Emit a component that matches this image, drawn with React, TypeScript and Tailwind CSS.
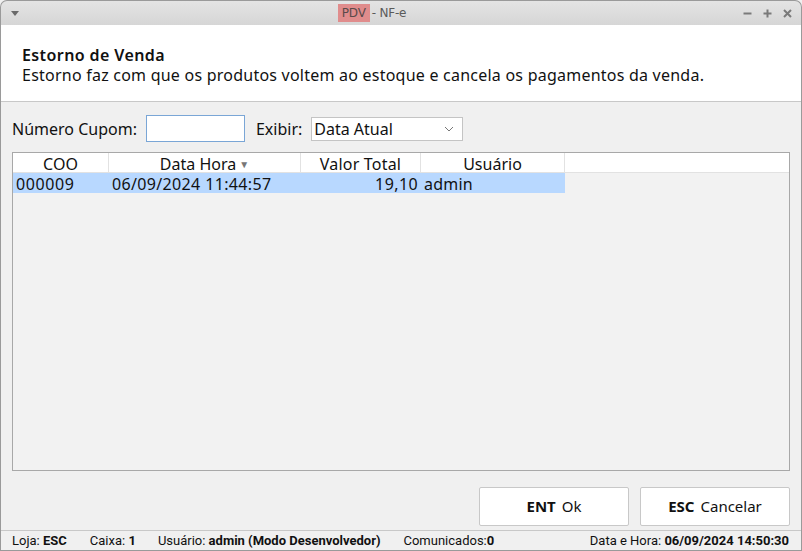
import React from "react";

const font = { fontFamily: '"Noto Sans", "Open Sans", sans-serif' };

export default function App() {
  return (
    <div className="w-[802px] h-[551px] bg-[#f0f0f0] flex flex-col overflow-hidden" style={font}>
      {/* title bar */}
      <div className="h-[25px] shrink-0 rounded-t-[7px] border border-b-0 border-[#9a9a9a] bg-gradient-to-b from-[#e4e4e4] to-[#d6d6d6] flex items-center relative">
        <svg width="10" height="8" viewBox="0 0 10 8" className="ml-[9px]">
          <path d="M1 2 L9 2 L5 7 Z" fill="#6a6a6a" />
        </svg>
        <div className="absolute left-0 right-0 top-0 h-full flex items-center justify-center pointer-events-none pr-[58px]">
          <span className="text-[12px] text-[#5a5a5a] flex items-center" style={{ fontFamily: '"DejaVu Sans", sans-serif', letterSpacing: "-0.2px" }}>
            <span className="bg-[#e08c8c] px-[4px] h-[18px] leading-[18px] text-[#5a4a4a]">PDV</span>
            <span className="ml-[2px]">- NF-e</span>
          </span>
        </div>
        <div className="ml-auto mr-[9px] flex items-center gap-[11px] text-[#7a7a7a]">
          <svg width="9" height="9" viewBox="0 0 9 9"><path d="M0.5 4.5 H8.5" stroke="#7a7a7a" strokeWidth="2" /></svg>
          <svg width="9" height="9" viewBox="0 0 9 9"><path d="M0.5 4.5 H8.5 M4.5 0.5 V8.5" stroke="#7a7a7a" strokeWidth="2" /></svg>
          <svg width="9" height="9" viewBox="0 0 9 9"><path d="M1 1 L8 8 M8 1 L1 8" stroke="#7a7a7a" strokeWidth="2" /></svg>
        </div>
      </div>

      <div className="flex-1 flex flex-col border-x border-b border-[#9a9a9a] min-h-0">
        {/* header */}
        <div className="h-[77px] shrink-0 bg-white border-b border-[#c8c8c8] pl-[21px] pt-[20px]">
          <div className="text-[16px] font-semibold text-[#111] leading-[20px] tracking-[0.4px]">Estorno de Venda</div>
          <div className="text-[16px] text-[#111] leading-[20px] tracking-[0.23px]">Estorno faz com que os produtos voltem ao estoque e cancela os pagamentos da venda.</div>
        </div>

        {/* body */}
        <div className="flex-1 flex flex-col px-[11px] pt-[13px] min-h-0">
          <div className="h-[27px] flex items-center text-[16px] text-[#111]">
            <span>Número Cupom:</span>
            <div className="ml-[9px] w-[99px] h-[27px] bg-white border border-[#7aa6d6]" />
            <span className="ml-[11px]">Exibir:</span>
            <div className="ml-[9px] w-[152px] h-[24px] bg-white border border-[#c4c4c4] flex items-center pl-[2px] pr-[8px]">
              <span>Data Atual</span>
              <svg className="ml-auto" width="10" height="6" viewBox="0 0 10 6"><path d="M1 1 L5 5 L9 1" stroke="#777" fill="none" strokeWidth="1" /></svg>
            </div>
          </div>

          {/* table */}
          <div className="mt-[10px] h-[319px] border border-[#a8a8a8] bg-[#f2f2f2] flex flex-col text-[16px] text-[#111]">
            <div className="h-[20px] bg-white flex border-b border-[#e2e2e2] leading-[20px]">
              <div className="w-[96px] text-center border-r border-[#e2e2e2] pt-[1px]">COO</div>
              <div className="w-[192px] border-r border-[#e2e2e2] pt-[1px] flex items-start justify-center">
                <span>Data Hora</span>
                <span className="text-[10px] text-[#777] ml-[3px] leading-[20px]">▼</span>
              </div>
              <div className="w-[120px] text-center border-r border-[#e2e2e2] pt-[1px] tracking-[0.2px]">Valor Total</div>
              <div className="w-[144px] text-center border-r border-[#e2e2e2] pt-[1px]">Usuário</div>
              <div className="flex-1" />
            </div>
            <div className="h-[20px] w-[552px] bg-[#b8d8ff] flex leading-[20px] pt-[1px]">
              <div className="w-[96px] pl-[3px] tracking-[0.6px]">000009</div>
              <div className="w-[192px] pl-[3px] tracking-[0.35px]">06/09/2024 11:44:57</div>
              <div className="w-[120px] text-right pr-[3px] tracking-[0.4px]">19,10</div>
              <div className="w-[144px] pl-[3px] tracking-[0.2px]">admin</div>
            </div>
          </div>

          <div className="mt-[16px] flex justify-end gap-[11px]">
            <button className="w-[150px] h-[39px] bg-white border border-[#c8c8c8] rounded-[2px] text-[15px] text-[#111] flex items-center justify-center">
              <span className="font-bold">ENT</span>
              <span className="ml-[6px]">Ok</span>
            </button>
            <button className="w-[150px] h-[39px] bg-white border border-[#c8c8c8] rounded-[2px] text-[15px] text-[#111] flex items-center justify-center">
              <span className="font-bold">ESC</span>
              <span className="ml-[6px]">Cancelar</span>
            </button>
          </div>

          <div className="flex-1" />
        </div>

        {/* status bar */}
        <div className="h-[20px] shrink-0 border-t border-[#c8c8c8] flex items-center text-[13px] text-[#111] pl-[11px] pr-[12px]" style={{ fontFamily: 'Roboto, "Liberation Sans", sans-serif' }}>
          <span>Loja: <b className="font-bold">ESC</b></span>
          <span className="ml-[23px]">Caixa: <b className="font-bold">1</b></span>
          <span className="ml-[22px]">Usuário: <b className="font-bold">admin (Modo Desenvolvedor)</b></span>
          <span className="ml-[23px]">Comunicados:<b className="font-bold">0</b></span>
          <span className="ml-auto">Data e Hora: <b className="font-bold">06/09/2024 14:50:30</b></span>
        </div>
      </div>
    </div>
  );
}
